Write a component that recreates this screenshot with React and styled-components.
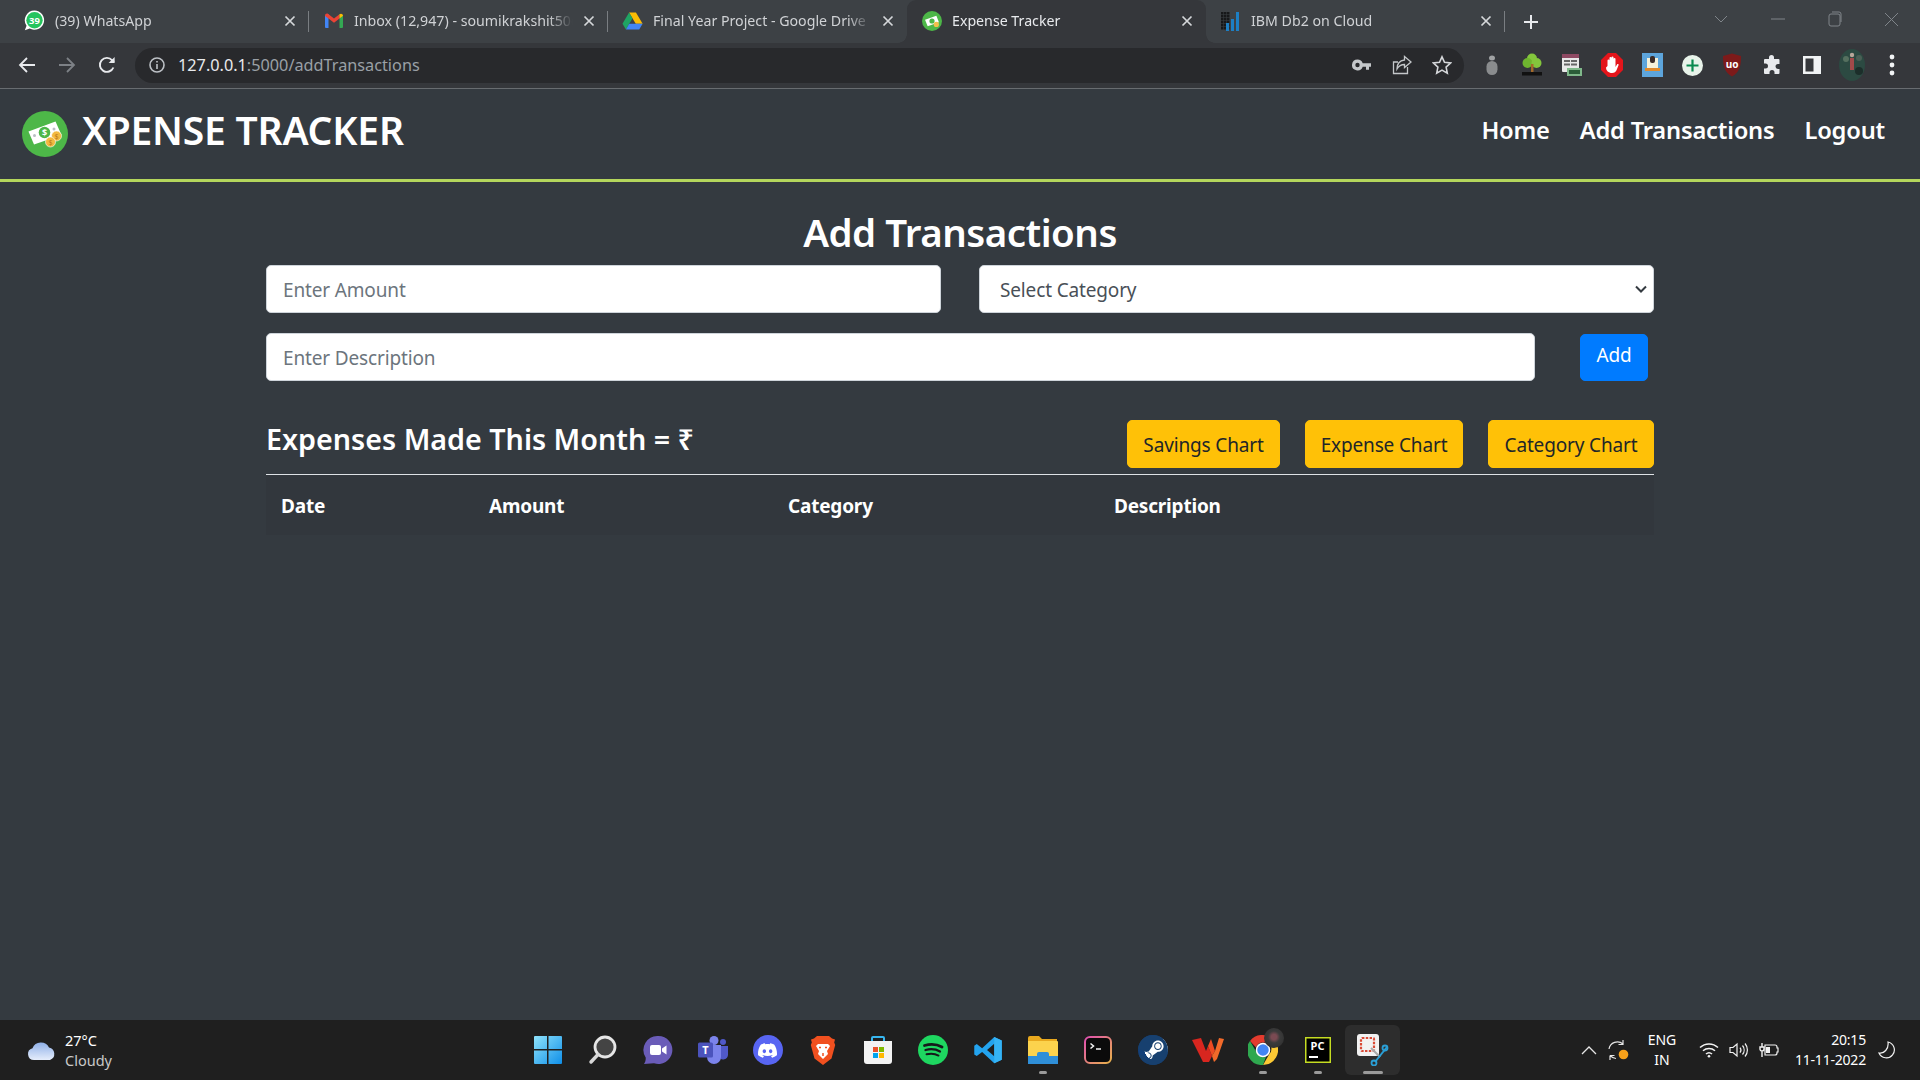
import React from "react";
import styled, { createGlobalStyle } from "styled-components";
import { SiDiscord, SiSteam } from "react-icons/si";

const GlobalStyle = createGlobalStyle`
  html, body { margin: 0; padding: 0; background: #343a40; }
  body { font-family: "Noto Sans", "Open Sans", Arial, sans-serif; overflow: hidden; }
  * { box-sizing: border-box; }
`;

/* ---------- browser favicons ---------- */

const WhatsappFav = () => (
  <svg width="21" height="21" viewBox="0 0 20 20">
    <path d="M10 0.5a9.2 9.2 0 1 1-4.6 17.2L0.8 19.4l1.6-4.5A9.2 9.2 0 0 1 10 0.5z" fill="#fff" />
    <circle cx="10" cy="9.7" r="7.8" fill="#25c45e" />
    <text x="10" y="13" fontSize="9" fontWeight="700" textAnchor="middle" fill="#fff" fontFamily="Noto Sans">39</text>
  </svg>
);

const GmailFav = () => (
  <svg width="20" height="20" viewBox="0 0 20 20">
    <path d="M1 4.5 4.5 3v14H2a1 1 0 0 1-1-1z" fill="#4285f4" />
    <path d="M19 4.5 15.5 3v14H18a1 1 0 0 0 1-1z" fill="#34a853" />
    <path d="M1 4.5C1 2.6 3 2 4.2 2.9L10 7.4l5.500-4.200v4.400L10 11.800 4.500 7.600 1 5z" fill="#ea4335" />
    <path d="M15.500 3.200c1.400-1.100 3.500-.4 3.500 1.500L15.500 7.600z" fill="#fbbc04" />
  </svg>
);

const DriveFav = () => (
  <svg width="22" height="20" viewBox="0 0 22 20">
    <path d="M7.400 1h7.200l7 12h-7.200z" fill="#fbbc04" />
    <path d="M7.400 1 0.500 13l3.600 6L11 7.200z" fill="#1fa463" />
    <path d="M7.600 13h14l-3.600 6H4.100z" fill="#4285f4" />
  </svg>
);

const ExpenseFav = () => (
  <svg width="20" height="20" viewBox="0 0 46 46">
    <circle cx="23" cy="23" r="23" fill="#4db748" />
    <path d="M7 20 33 11l6 15-26 9z" fill="#fff" />
    <circle cx="23" cy="23" r="6" fill="#4db748" />
    <circle cx="33" cy="31" r="6" fill="#f3c04c" />
  </svg>
);

const IbmFav = () => (
  <svg width="20" height="20" viewBox="0 0 20 20">
    <g fill="#17181a">
      {[1, 4, 7, 10, 13, 16].map((y) => (
        <g key={y}>
          <rect x="0" y={y} width="2.500" height="2.500" />
          <rect x="3" y={y} width="2.500" height="2.500" />
          <rect x="6" y={y} width="2.500" height="2.500" />
        </g>
      ))}
    </g>
    <rect x="5" y="12" width="3" height="8" fill="#1d7fc4" />
    <rect x="10" y="8" width="3" height="12" fill="#1d7fc4" />
    <rect x="15" y="1" width="3" height="19" fill="#1d7fc4" />
  </svg>
);

const CloseMark = () => (
  <svg width="12" height="12" viewBox="0 0 12 12">
    <path d="M1.500 1.500l9 9M10.500 1.500l-9 9" stroke="#d5d7da" strokeWidth="1.700" />
  </svg>
);

/* ---------- toolbar icons ---------- */

const BackIcon = ({ color }) => (
  <svg width="18" height="18" viewBox="0 0 18 18" fill="none" stroke={color} strokeWidth="1.800">
    <path d="M17 9H2M9 2 2 9l7 7" />
  </svg>
);

const ForwardIcon = ({ color }) => (
  <svg width="18" height="18" viewBox="0 0 18 18" fill="none" stroke={color} strokeWidth="1.800">
    <path d="M1 9h15M9 2l7 7-7 7" />
  </svg>
);

const ReloadIcon = () => (
  <svg width="18" height="18" viewBox="0 0 18 18" fill="none" stroke="#e8eaed" strokeWidth="1.900">
    <path d="M15.400 11.500A7 7 0 1 1 14.200 4.300L16 6" />
    <path d="M16.600 1v6h-6" fill="#e8eaed" stroke="none" />
  </svg>
);

const InfoIcon = () => (
  <svg width="18" height="18" viewBox="0 0 18 18" fill="none" stroke="#bdc1c6" strokeWidth="1.600">
    <circle cx="9" cy="9" r="7" />
    <path d="M9 8v5M9 5v1.600" />
  </svg>
);

const KeyIcon = () => (
  <svg width="20" height="12" viewBox="0 0 20 12">
    <path d="M5.500 0.500a5.500 5.500 0 0 1 5.200 3.700H19v3.600h-2v3h-3v-3h-3.300A5.500 5.500 0 1 1 5.500 0.500zm0 3.300a2.200 2.200 0 1 0 0 4.400 2.200 2.200 0 0 0 0-4.400z" fill="#c4c7ca" />
  </svg>
);

const ShareIcon = () => (
  <svg width="20" height="20" viewBox="0 0 20 20" fill="none" stroke="#c4c7ca" strokeWidth="1.300">
    <path d="M15.500 12v6.500H1.500V7H6" />
    <path d="M12.500 1.500 19 7l-6.500 5.500V9.500c-3.300 0-5.600 1.100-7.500 4.500 0-5 2.700-8.400 7.500-9z" />
  </svg>
);

const StarIcon = () => (
  <svg width="20" height="20" viewBox="0 0 20 20" fill="none" stroke="#d5d7da" strokeWidth="1.600">
    <path d="M10 1.800l2.500 5.500 6 .7-4.400 4.100 1.200 6L10 15.100 4.700 18.100l1.200-6L1.500 8l6-.7z" />
  </svg>
);

const GhostExt = () => (
  <svg width="14" height="24" viewBox="0 0 14 24">
    <ellipse cx="7" cy="5" rx="3" ry="2.500" fill="#a0a2a4" />
    <rect x="1.500" y="8" width="11" height="14" rx="5.500" fill="#8a8c8e" />
  </svg>
);

const TreeExt = () => (
  <svg width="22" height="24" viewBox="0 0 22 24">
    <circle cx="11" cy="5.500" r="5" fill="#83c63c" />
    <circle cx="6.500" cy="10" r="5" fill="#6fb52f" />
    <circle cx="15.500" cy="10" r="5" fill="#83c63c" />
    <rect x="10" y="11" width="2.500" height="8" fill="#a3692a" />
    <rect x="1" y="19" width="20" height="3.500" fill="#111" />
  </svg>
);

const CalcExt = () => (
  <svg width="20" height="24" viewBox="0 0 20 24">
    <rect x="0" y="1" width="17" height="18" rx="1" fill="#e8e8e8" />
    <rect x="0" y="1" width="17" height="4" fill="#8e4a63" />
    <g fill="#666">
      <rect x="2" y="7" width="6" height="2" />
      <rect x="9" y="7" width="6" height="2" />
      <rect x="2" y="10.500" width="6" height="2" />
      <rect x="9" y="10.500" width="6" height="2" />
    </g>
    <rect x="5" y="15" width="15" height="8" fill="#7fb88a" />
    <rect x="7" y="17" width="11" height="4" fill="#2b5d38" />
  </svg>
);

const StopExt = () => (
  <svg width="22" height="24" viewBox="0 0 22 24">
    <path d="M7 0h8l7 7v10l-7 7H7l-7-7V7z" fill="#e4151b" />
    <path d="M6.500 13V7.500a1 1 0 0 1 2 0V11V5a1 1 0 0 1 2 0v6V4.500a1 1 0 0 1 2 0V11V6a1 1 0 0 1 2 0v8l1.500-2.500c.6-1 2-.3 1.500.8l-2 5c-.7 1.500-2 2.700-4.500 2.700-3.500 0-6-2.500-6-5.500z" fill="#fff" />
  </svg>
);

const NoteExt = () => (
  <svg width="21" height="24" viewBox="0 0 21 24">
    <rect x="0" y="0" width="21" height="24" fill="#5da5dc" />
    <rect x="5" y="5" width="11" height="12" fill="#f6f1d9" />
    <rect x="8" y="3" width="5" height="7" rx="2" fill="#3a2c28" />
    <rect x="3" y="15" width="15" height="3" fill="#e08a2b" />
  </svg>
);

const PlusExt = () => (
  <svg width="21" height="21" viewBox="0 0 21 21">
    <circle cx="10.500" cy="10.500" r="10.500" fill="#e8f3ea" />
    <path d="M10.500 4.500v12M4.500 10.500h12" stroke="#0a8a4f" strokeWidth="2.200" />
  </svg>
);

const UblockExt = () => (
  <svg width="20" height="24" viewBox="0 0 20 24">
    <path d="M10 0.500 19 3c0 9-1 16-9 20.500C2 19 1 12 1 3z" fill="#7d1a1a" />
    <text x="10" y="14.500" fontSize="10" fontWeight="700" textAnchor="middle" fill="#fff" fontFamily="Noto Sans">uo</text>
  </svg>
);

const PuzzleExt = () => (
  <svg width="20" height="20" viewBox="0 0 20 20">
    <path d="M7 2.500a2.500 2.500 0 0 1 5 0V4h4.500a1 1 0 0 1 1 1v4h-1.500a2.500 2.500 0 0 0 0 5h1.500v4a1 1 0 0 1-1 1H12.500v-1.500a2.500 2.500 0 0 0-5 0V19H3a1 1 0 0 1-1-1v-4.500h1.500a2.500 2.500 0 0 0 0-5H2V5a1 1 0 0 1 1-1h4z" fill="#e8eaed" />
  </svg>
);

const SidebarExt = () => (
  <svg width="18" height="18" viewBox="0 0 18 18">
    <path d="M0 0h18v18H0zM2.500 2.500v13h8v-13z" fill="#f1f3f4" fillRule="evenodd" />
  </svg>
);

const AvatarExt = () => (
  <svg width="26" height="32" viewBox="0 0 26 32">
    <ellipse cx="13" cy="16" rx="13" ry="16" fill="#2c4a42" />
    <circle cx="7" cy="10" r="3" fill="#55705f" />
    <circle cx="20" cy="22" r="4" fill="#1c2e2a" />
    <circle cx="20" cy="9" r="3" fill="#4a5f55" />
    <rect x="11" y="9" width="4" height="12" fill="#a24a4a" />
    <circle cx="13" cy="6" r="2.200" fill="#b7a79a" />
  </svg>
);

const DotsExt = () => (
  <svg width="6" height="22" viewBox="0 0 6 22" fill="#f1f3f4">
    <circle cx="3" cy="3" r="2.400" />
    <circle cx="3" cy="11" r="2.400" />
    <circle cx="3" cy="19" r="2.400" />
  </svg>
);

/* ---------- site logo ---------- */

const BrandLogo = () => (
  <svg width="46" height="46" viewBox="0 0 46 46">
    <circle cx="23" cy="23" r="23" fill="#4db748" />
    <path d="M6.500 20.500 33.500 10.500l6 13.500L12 33.500z" fill="#fff" />
    <circle cx="22.500" cy="21.500" r="5.800" fill="#4db748" />
    <text x="22.500" y="25" fontSize="9" fontWeight="700" textAnchor="middle" fill="#fff" fontFamily="Noto Sans">$</text>
    <circle cx="12.500" cy="24.500" r="1.500" fill="#b9bfc4" />
    <circle cx="32" cy="18" r="1.500" fill="#b9bfc4" />
    <circle cx="34.500" cy="25" r="5" fill="#f3b93f" stroke="#fff" strokeWidth=".6" />
    <circle cx="28.500" cy="31" r="5" fill="#f3b93f" stroke="#fff" strokeWidth=".6" />
    <text x="34.500" y="28" fontSize="7" textAnchor="middle" fill="#b9791a" fontFamily="Noto Sans">$</text>
    <text x="28.500" y="34" fontSize="7" textAnchor="middle" fill="#b9791a" fontFamily="Noto Sans">$</text>
  </svg>
);

/* ---------- taskbar icons ---------- */

const WindowsIcon = () => (
  <svg width="30" height="30" viewBox="0 0 30 30">
    <defs>
      <linearGradient id="winGrad" x1="0" y1="0" x2="1" y2="1">
        <stop offset="0" stopColor="#8fe3fb" />
        <stop offset="1" stopColor="#0f8fe8" />
      </linearGradient>
    </defs>
    <path d="M1 2a1 1 0 0 1 1-1h12v13H1zM15.500 1H28a1 1 0 0 1 1 1v12H15.500zM1 15.500h13V29H2a1 1 0 0 1-1-1zM15.500 15.500H29V28a1 1 0 0 1-1 1H15.500z" fill="url(#winGrad)" />
  </svg>
);

const SearchIcon = () => (
  <svg width="30" height="30" viewBox="0 0 30 30">
    <circle cx="17" cy="12" r="10" fill="#444" stroke="#e6e6e6" strokeWidth="2.800" />
    <path d="M10 19.500 3 27" stroke="#d8d8d8" strokeWidth="3.400" strokeLinecap="round" />
  </svg>
);

const MeetIcon = () => (
  <svg width="30" height="30" viewBox="0 0 30 30">
    <path d="M15.500 1A14 14 0 1 1 11 28.300L1 29c1.500-2 1.800-4 1.700-6.500A14 14 0 0 1 15.500 1z" fill="#6a5cb8" />
    <rect x="7" y="10" width="11" height="10" rx="2" fill="#fff" />
    <path d="M19 13.500 23.500 10.500v9L19 16.500z" fill="#fff" />
  </svg>
);

const TeamsIcon = () => (
  <svg width="32" height="30" viewBox="0 0 32 30">
    <circle cx="17" cy="5.500" r="4.500" fill="#7b83eb" />
    <circle cx="26" cy="7" r="3" fill="#5059c9" />
    <path d="M21 11h10v9a5 5 0 0 1-9 2.500z" fill="#5059c9" />
    <path d="M10 10h14v12a7 7 0 0 1-14 0z" fill="#7b83eb" />
    <rect x="1" y="7.500" width="15" height="15" rx="1.500" fill="#4b53bc" />
    <text x="8.500" y="19" fontSize="11" fontWeight="700" textAnchor="middle" fill="#fff" fontFamily="Noto Sans">T</text>
  </svg>
);

const DiscordBadge = styled.span`
  width: 30px;
  height: 30px;
  border-radius: 50%;
  background: #5865f2;
  display: flex;
  align-items: center;
  justify-content: center;
  color: #fff;
  font-size: 19px;
`;

const BraveIcon = () => (
  <svg width="26" height="30" viewBox="0 0 26 30">
    <path d="M7 1h12l3 2.500 3 1-.8 3 1 2.500-3.700 13.500L13 30l-8.500-6.500L.8 10l1-2.500-.8-3 3-1z" fill="#f1501f" />
    <path d="M8 9h10l2 2-3 5 1 3-5 5-5-5 1-3-3-5z" fill="#fff" />
    <path d="M11 12.500h-2M17 12.500h-2M13 18v3" stroke="#f1501f" strokeWidth="1.500" />
  </svg>
);

const StoreIcon = () => (
  <svg width="30" height="30" viewBox="0 0 30 30">
    <path d="M9 6V3a1 1 0 0 1 1-1h10a1 1 0 0 1 1 1v3" fill="none" stroke="#37b6ef" strokeWidth="2" />
    <path d="M1 6h28v20a3 3 0 0 1-3 3H4a3 3 0 0 1-3-3z" fill="#f3f3f3" />
    <rect x="10" y="12" width="5" height="5" fill="#e9522b" />
    <rect x="16" y="12" width="5" height="5" fill="#7fb900" />
    <rect x="10" y="18" width="5" height="5" fill="#00a3ee" />
    <rect x="16" y="18" width="5" height="5" fill="#ffb800" />
  </svg>
);

const SpotifyIcon = () => (
  <svg width="30" height="30" viewBox="0 0 30 30">
    <circle cx="15" cy="15" r="15" fill="#1ed760" />
    <g fill="none" stroke="#15191a" strokeLinecap="round">
      <path d="M6.500 10.500c6-1.700 12.500-1.200 17.500 1.500" strokeWidth="2.800" />
      <path d="M7.500 15c5-1.300 10.500-.8 14.500 1.500" strokeWidth="2.300" />
      <path d="M8.500 19.300c4.300-1 8.500-.7 12 1.300" strokeWidth="1.900" />
    </g>
  </svg>
);

const VscodeIcon = () => (
  <svg width="30" height="30" viewBox="0 0 24 24">
    <path d="M17 1.500 23 4.300v15.400L17 22.500 7.300 13.500 3 16.800 1 15.500V8.500l2-1.300 4.300 3.300zM17 7 11.200 12 17 17z" fill="#23a3ee" fillRule="evenodd" />
    <path d="M17 1.500 23 4.300v15.400L17 22.500z" fill="#35b3f5" />
  </svg>
);

const FolderIcon = () => (
  <svg width="32" height="30" viewBox="0 0 32 30">
    <path d="M1 3a2 2 0 0 1 2-2h9l3 3h15a2 2 0 0 1 0 0v3H1z" fill="#e9a91e" />
    <path d="M1 6h29a1 1 0 0 1 1 1v21a1 1 0 0 1-1 1H2a1 1 0 0 1-1-1z" fill="#fcd34d" />
    <path d="M10 19a2 2 0 0 1 2-2h8a2 2 0 0 1 2 2v2h9v8H1v-8h9z" fill="#2f8fd8" />
  </svg>
);

const TerminalIcon = () => (
  <svg width="28" height="28" viewBox="0 0 28 28">
    <defs>
      <linearGradient id="termGrad" x1="0" y1="0" x2="1" y2="1">
        <stop offset="0" stopColor="#e04fb0" />
        <stop offset="1" stopColor="#e8b24a" />
      </linearGradient>
    </defs>
    <rect x="1" y="1" width="26" height="26" rx="5" fill="#0b0b0b" stroke="url(#termGrad)" strokeWidth="2" />
    <path d="M6.500 7.500 9.500 10l-3 2.500M12 13h5" fill="none" stroke="#f4f4f4" strokeWidth="1.500" />
  </svg>
);

const SteamBadge = styled.span`
  width: 30px;
  height: 30px;
  border-radius: 50%;
  background: radial-gradient(circle at 60% 45%, #fff 48%, #123f79 49%);
  display: flex;
  align-items: center;
  justify-content: center;
  color: #17406f;
  font-size: 30px;
`;

const WpsIcon = () => (
  <svg width="32" height="26" viewBox="0 0 32 26">
    <path d="M0 3 9 1l5 13 2-5 4 10-3 6h-6z" fill="#d8261f" />
    <path d="M16 9 19 2l4 12-3 5z" fill="#ee4b22" />
    <path d="M23 14 27 1l5 1-7 20-3 3-2-6z" fill="#f26a2a" />
  </svg>
);

const ChromeIcon = () => (
  <svg width="30" height="30" viewBox="0 0 30 30">
    <path d="M15 0a15 15 0 0 1 13 7.500H15a7.500 7.500 0 0 0-7 5L2 6A15 15 0 0 1 15 0z" fill="#e33b2e" />
    <path d="M28 7.500A15 15 0 0 1 15 30l6.500-11.200A7.500 7.500 0 0 0 20 7.500z" fill="#fcc934" />
    <path d="M2 6l6.500 11.200a7.500 7.500 0 0 0 9.500 4.600L15 30A15 15 0 0 1 2 6z" fill="#2fa84f" />
    <circle cx="15" cy="15" r="6.500" fill="#4285f4" stroke="#fff" strokeWidth="1.500" />
  </svg>
);

const ChromeBadge = styled.span`
  position: absolute;
  top: 3px;
  right: 6px;
  width: 20px;
  height: 20px;
  border-radius: 50%;
  background: radial-gradient(circle at 50% 45%, #7a4a52 0 18%, #3b3b3b 40%, #2b2b2b);
`;

const PycharmIcon = () => (
  <svg width="26" height="26" viewBox="0 0 26 26">
    <rect x="0.500" y="0.500" width="25" height="25" fill="#000" stroke="#c5dc22" strokeWidth="2" />
    <text x="12.500" y="13" fontSize="11" fontWeight="700" textAnchor="middle" fill="#fff" fontFamily="Noto Sans">PC</text>
    <rect x="4" y="19" width="9" height="2" fill="#fff" />
  </svg>
);

const SnipIcon = () => (
  <svg width="32" height="32" viewBox="0 0 32 32">
    <rect x="0" y="0" width="22" height="22" rx="3" fill="#f2f2f2" />
    <rect x="4" y="4" width="13" height="13" rx="1" fill="none" stroke="#d94a36" strokeWidth="2.200" strokeDasharray="2.400 1.400" />
    <path d="M14 14l9 9" stroke="#a9a9a9" strokeWidth="2" />
    <path d="M30 13 18 28" stroke="#2a9fd6" strokeWidth="2" />
    <circle cx="28" cy="14" r="2.500" fill="none" stroke="#2a9fd6" strokeWidth="1.800" />
    <circle cx="17" cy="29" r="2.500" fill="none" stroke="#2a9fd6" strokeWidth="1.800" />
  </svg>
);

/* ---------- tray icons ---------- */

const ChevronUpIcon = () => (
  <svg width="16" height="10" viewBox="0 0 16 10" fill="none" stroke="#e6e6e6" strokeWidth="1.300">
    <path d="M1 9 8 2l7 7" />
  </svg>
);

const SyncIcon = () => (
  <svg width="22" height="22" viewBox="0 0 22 22" fill="none" stroke="#e6e6e6" strokeWidth="1.200">
    <path d="M1 10a8.500 8.500 0 0 1 14-5M15 1v4.500h-4.500" />
    <path d="M2 16.500h4.500M2 16.500V21M2 16.500c2 2 4 3 6 3" />
    <circle cx="15.500" cy="15.500" r="4.800" fill="#f7a11a" stroke="none" />
  </svg>
);

const WifiIcon = () => (
  <svg width="20" height="16" viewBox="0 0 20 16" fill="none" stroke="#f2f2f2" strokeWidth="1.500">
    <path d="M1 5.500a13 13 0 0 1 18 0M4 8.800a9 9 0 0 1 12 0M7 12a4.500 4.500 0 0 1 6 0" />
    <circle cx="10" cy="14.300" r="1.300" fill="#f2f2f2" stroke="none" />
  </svg>
);

const VolumeIcon = () => (
  <svg width="20" height="16" viewBox="0 0 20 16" fill="none" stroke="#f2f2f2" strokeWidth="1.200">
    <path d="M1 5.500h3L8 2v12l-4-3.500H1z" />
    <path d="M11 5.500a4 4 0 0 1 0 5M13.500 3.500a7 7 0 0 1 0 9M16 1.500a10 10 0 0 1 0 13" />
  </svg>
);

const BatteryIcon = () => (
  <svg width="20" height="16" viewBox="0 0 20 16" fill="none" stroke="#f2f2f2" strokeWidth="1.200">
    <path d="M6 3h10a2 2 0 0 1 2 2v1h1v4h-1v1a2 2 0 0 1-2 2H6z" />
    <rect x="7" y="5" width="4" height="6" fill="#f2f2f2" stroke="none" />
    <path d="M3 1v4M1 5h4v2a2 2 0 0 1-4 0zM3 9v6" strokeWidth="1.400" />
  </svg>
);

const MoonIcon = () => (
  <svg width="18" height="18" viewBox="0 0 18 18" fill="none" stroke="#f2f2f2" strokeWidth="1.200">
    <path d="M10 1a8 8 0 1 1-9 11c5 1 10-4 9-11z" />
  </svg>
);

const CloudIcon = () => (
  <svg width="30" height="22" viewBox="0 0 30 22">
    <defs>
      <linearGradient id="cloudGrad" x1="0" y1="0" x2="0" y2="1">
        <stop offset="0" stopColor="#8fb0e8" />
        <stop offset="1" stopColor="#e5edfb" />
      </linearGradient>
    </defs>
    <path d="M8 21a6 6 0 0 1-1.500-11.800A9 9 0 0 1 23 8.500 6.500 6.500 0 0 1 24 21z" fill="url(#cloudGrad)" />
  </svg>
);

/* ---------- data ---------- */

const tabs = [
  { title: "(39) WhatsApp", icon: <WhatsappFav />, divider: true },
  { title: "Inbox (12,947) - soumikrakshit50@gmail.com", icon: <GmailFav />, divider: true },
  { title: "Final Year Project - Google Drive", icon: <DriveFav /> },
  { title: "Expense Tracker", icon: <ExpenseFav />, active: true },
  { title: "IBM Db2 on Cloud", icon: <IbmFav />, divider: true },
];

const extensions = [
  <GhostExt />, <TreeExt />, <CalcExt />, <StopExt />, <NoteExt />, <PlusExt />,
  <UblockExt />, <PuzzleExt />, <SidebarExt />, <AvatarExt />, <DotsExt />,
];

const dockItems = [
  { icon: <WindowsIcon /> },
  { icon: <SearchIcon /> },
  { icon: <MeetIcon /> },
  { icon: <TeamsIcon /> },
  { icon: <DiscordBadge><SiDiscord /></DiscordBadge> },
  { icon: <BraveIcon /> },
  { icon: <StoreIcon /> },
  { icon: <SpotifyIcon /> },
  { icon: <VscodeIcon /> },
  { icon: <FolderIcon />, running: true },
  { icon: <TerminalIcon /> },
  { icon: <SteamBadge><SiSteam /></SteamBadge> },
  { icon: <WpsIcon /> },
  { icon: <ChromeIcon />, running: true, badge: true },
  { icon: <PycharmIcon />, running: true },
  { icon: <SnipIcon />, focused: true },
];

const App = () => (
  <Screen>
    <GlobalStyle />
    <TabStrip>
      {tabs.map((tab) => (
        <Tab key={tab.title} $active={tab.active}>
          <Favicon>{tab.icon}</Favicon>
          <TabTitle>{tab.title}</TabTitle>
          <CloseMark />
          {tab.divider && <TabDivider />}
        </Tab>
      ))}
      <NewTab>
        <svg width="16" height="16" viewBox="0 0 16 16" stroke="#e8eaed" strokeWidth="2">
          <path d="M8 1v14M1 8h14" />
        </svg>
      </NewTab>
      <WindowControls>
        <WindowButton>
          <svg width="14" height="8" viewBox="0 0 14 8" fill="none" stroke="#80858a"><path d="M1 1l6 6 6-6" /></svg>
        </WindowButton>
        <WindowButton>
          <svg width="14" height="2" viewBox="0 0 14 2" stroke="#80858a"><path d="M0 1h14" /></svg>
        </WindowButton>
        <WindowButton>
          <svg width="14" height="16" viewBox="0 0 14 16" fill="none" stroke="#80858a"><rect x="1" y="3" width="11" height="12" rx="2" /><path d="M4 1h7a2 2 0 0 1 2 2v8" /></svg>
        </WindowButton>
        <WindowButton>
          <svg width="15" height="15" viewBox="0 0 15 15" stroke="#80858a"><path d="M1 1l13 13M14 1 1 14" /></svg>
        </WindowButton>
      </WindowControls>
    </TabStrip>

    <Toolbar>
      <ToolSlot><BackIcon color="#e8eaed" /></ToolSlot>
      <ToolSlot><ForwardIcon color="#7d8186" /></ToolSlot>
      <ToolSlot><ReloadIcon /></ToolSlot>
      <AddressBar>
        <InfoIcon />
        <Url>127.0.0.1<UrlRest>:5000/addTransactions</UrlRest></Url>
        <ToolSlot><KeyIcon /></ToolSlot>
        <ToolSlot><ShareIcon /></ToolSlot>
        <ToolSlot><StarIcon /></ToolSlot>
      </AddressBar>
      <Extensions>
        {extensions.map((icon, i) => (
          <ToolSlot key={i}>{icon}</ToolSlot>
        ))}
      </Extensions>
    </Toolbar>

    <NavBar>
      <Brand>
        <BrandLogo />
        <BrandName>XPENSE TRACKER</BrandName>
      </Brand>
      <NavLinks>
        <NavLink>Home</NavLink>
        <NavLink>Add Transactions</NavLink>
        <NavLink>Logout</NavLink>
      </NavLinks>
    </NavBar>

    <Main>
      <PageTitle>Add Transactions</PageTitle>
      <TwoCols>
        <TextInput placeholder="Enter Amount" />
        <SelectWrap>
          <Select defaultValue="">
            <option value="">Select Category</option>
          </Select>
          <SelectArrow width="12" height="8" viewBox="0 0 12 8" fill="none" stroke="#343a40" strokeWidth="2">
            <path d="M1 1.500l5 5 5-5" />
          </SelectArrow>
        </SelectWrap>
      </TwoCols>
      <DescriptionRow>
        <TextInput placeholder="Enter Description" />
        <AddButton>Add</AddButton>
      </DescriptionRow>
      <SummaryRow>
        <SummaryTitle>Expenses Made This Month = ₹</SummaryTitle>
        <ChartButtons>
          <ChartButton $width={153}>Savings Chart</ChartButton>
          <ChartButton $width={158}>Expense Chart</ChartButton>
          <ChartButton $width={166}>Category Chart</ChartButton>
        </ChartButtons>
      </SummaryRow>
      <Table>
        <colgroup>
          <col width="208" />
          <col width="299" />
          <col width="326" />
          <col />
        </colgroup>
        <thead>
          <tr>
            <Th>Date</Th>
            <Th>Amount</Th>
            <Th>Category</Th>
            <Th>Description</Th>
          </tr>
        </thead>
      </Table>
    </Main>

    <Taskbar>
      <Weather>
        <CloudIcon />
        <WeatherText>
          <span>27°C</span>
          <WeatherMuted>Cloudy</WeatherMuted>
        </WeatherText>
      </Weather>
      <Dock>
        {dockItems.map((item, i) => (
          <DockItem key={i} $focused={item.focused}>
            {item.icon}
            {item.badge && <ChromeBadge />}
            {item.running && <RunDot />}
            {item.focused && <RunDot $wide />}
          </DockItem>
        ))}
      </Dock>
      <Tray>
        <TraySlot><ChevronUpIcon /></TraySlot>
        <TraySlot><SyncIcon /></TraySlot>
        <Lang>
          <span>ENG</span>
          <span>IN</span>
        </Lang>
        <TraySlot><WifiIcon /></TraySlot>
        <TraySlot><VolumeIcon /></TraySlot>
        <TraySlot><BatteryIcon /></TraySlot>
        <Clock>
          <span>20:15</span>
          <span>11-11-2022</span>
        </Clock>
        <TraySlot><MoonIcon /></TraySlot>
      </Tray>
    </Taskbar>
  </Screen>
);

export default App;

const Screen = styled.div`
  width: 1920px;
  height: 1080px;
  display: flex;
  flex-direction: column;
  background: #343a40;
  color: #fff;
`;

const TabStrip = styled.div`
  height: 43px;
  flex: none;
  display: flex;
  align-items: stretch;
  padding-left: 10px;
  background: #3d4145;
`;

const Tab = styled.div`
  position: relative;
  width: 299px;
  flex: none;
  display: flex;
  align-items: center;
  padding: 0 13px 2px 14px;
  background: ${(p) => (p.$active ? "#35373b" : "transparent")};
  border-radius: ${(p) => (p.$active ? "9px 9px 0 0" : "0")};
  color: ${(p) => (p.$active ? "#e8eaed" : "#d0d2d5")};

  ${(p) =>
    p.$active &&
    `
    &::before, &::after {
      content: "";
      position: absolute;
      bottom: 0;
      width: 9px;
      height: 9px;
    }
    &::before {
      left: -9px;
      background: radial-gradient(circle at 0 0, transparent 8.5px, #35373b 9px);
    }
    &::after {
      right: -9px;
      background: radial-gradient(circle at 100% 0, transparent 8.5px, #35373b 9px);
    }
  `}
`;

const TabDivider = styled.span`
  position: absolute;
  right: 0;
  top: 11px;
  height: 21px;
  width: 1px;
  background: #7a7e82;
`;

const Favicon = styled.span`
  width: 21px;
  height: 20px;
  flex: none;
  display: flex;
  align-items: center;
  justify-content: center;
`;

const TabTitle = styled.span`
  flex: 1;
  min-width: 0;
  margin: 0 8px 0 10px;
  overflow: hidden;
  white-space: nowrap;
  font-size: 14.2px;
  mask-image: linear-gradient(to right, #000 88%, transparent 99%);
`;

const NewTab = styled.div`
  width: 52px;
  flex: none;
  display: flex;
  align-items: center;
  justify-content: center;
`;

const WindowControls = styled.div`
  margin-left: auto;
  display: flex;
  align-items: flex-start;
`;

const WindowButton = styled.div`
  width: 57px;
  height: 38px;
  display: flex;
  align-items: center;
  justify-content: center;
`;

const Toolbar = styled.div`
  height: 46px;
  flex: none;
  display: flex;
  align-items: center;
  padding: 0 8px 1px 7px;
  background: #35373b;
  border-bottom: 1px solid #686c70;
`;

const ToolSlot = styled.div`
  width: 40px;
  height: 35px;
  flex: none;
  display: flex;
  align-items: center;
  justify-content: center;
`;

const AddressBar = styled.div`
  flex: 1;
  height: 35px;
  margin: 0 8px;
  display: flex;
  align-items: center;
  padding: 0 2px 0 13px;
  background: #28292c;
  border-radius: 18px;
`;

const Url = styled.div`
  flex: 1;
  margin-left: 12px;
  font-size: 16.25px;
  color: #e8eaed;
`;

const UrlRest = styled.span`
  color: #9aa0a6;
`;

const Extensions = styled.div`
  display: flex;
`;

const NavBar = styled.nav`
  height: 93px;
  flex: none;
  display: flex;
  align-items: center;
  justify-content: space-between;
  padding: 0 35px 0 22px;
  border-bottom: 3px solid #b4d65c;
`;

const Brand = styled.div`
  display: flex;
  align-items: center;
  gap: 14px;
`;

const BrandName = styled.div`
  margin-bottom: 8px;
  font-size: 39px;
  font-weight: 600;
  letter-spacing: -0.2px;
  line-height: 48px;
`;

const NavLinks = styled.div`
  display: flex;
  gap: 30px;
  margin-bottom: 8px;
`;

const NavLink = styled.a`
  font-size: 23.7px;
  font-weight: 600;
  letter-spacing: -0.2px;
  line-height: 36px;
  color: #fff;
`;

const Main = styled.main`
  width: 1388px;
  margin: 0 auto;
  flex: 1;
`;

const PageTitle = styled.h1`
  margin: 26px 0 9px;
  font-size: 38.5px;
  font-weight: 600;
  letter-spacing: -0.5px;
  line-height: 48px;
  text-align: center;
`;

const TwoCols = styled.div`
  display: grid;
  grid-template-columns: 675px 675px;
  justify-content: space-between;
  height: 48px;
`;

const TextInput = styled.input`
  display: block;
  width: 100%;
  height: 100%;
  padding: 2px 16px 0;
  border: 1px solid #ced4da;
  border-radius: 5px;
  background: #fff;
  font: 400 19px "Noto Sans", sans-serif;
  letter-spacing: -0.15px;
  color: #495057;
  outline: none;

  &::placeholder {
    color: #6c757d;
    opacity: 1;
  }
`;

const SelectWrap = styled.div`
  position: relative;
  height: 100%;
`;

const Select = styled.select`
  display: block;
  width: 100%;
  height: 100%;
  padding: 2px 16px 0 20px;
  border: 1px solid #ced4da;
  border-radius: 5px;
  background: #fff;
  font: 400 19px "Noto Sans", sans-serif;
  letter-spacing: -0.15px;
  color: #495057;
  outline: none;
  appearance: none;
`;

const SelectArrow = styled.svg`
  position: absolute;
  right: 7px;
  top: 20px;
  pointer-events: none;
`;

const DescriptionRow = styled.div`
  display: grid;
  grid-template-columns: 1269px 68px;
  column-gap: 45px;
  height: 47px;
  margin-top: 20px;
`;

const AddButton = styled.button`
  height: 47px;
  margin-top: 1px;
  padding: 0 0 6px;
  border: 1px solid #007bff;
  border-radius: 5px;
  background: #007bff;
  color: #fff;
  font: 400 19px "Noto Sans", sans-serif;
  letter-spacing: -0.15px;
`;

const SummaryRow = styled.div`
  display: flex;
  align-items: flex-start;
  justify-content: space-between;
  margin-top: 40px;
  padding-bottom: 6px;
  border-bottom: 1px solid #dee2e6;
`;

const SummaryTitle = styled.h3`
  margin: -2px 0 0 0;
  font-size: 28.7px;
  font-weight: 600;
  line-height: 42px;
`;

const ChartButtons = styled.div`
  display: flex;
  gap: 25px;
`;

const ChartButton = styled.button`
  width: ${(p) => p.$width}px;
  height: 48px;
  padding: 1px 0 0;
  border: 1px solid #ffc107;
  border-radius: 5px;
  background: #ffc107;
  color: #212529;
  font: 400 19px "Noto Sans", sans-serif;
  letter-spacing: -0.15px;
`;

const Table = styled.table`
  width: 100%;
  border-collapse: collapse;
  table-layout: fixed;
  background: #32373d;
`;

const Th = styled.th`
  height: 60px;
  padding: 2px 15px 0;
  font-size: 19px;
  font-weight: 700;
  letter-spacing: -0.2px;
  text-align: left;
`;

const Taskbar = styled.footer`
  height: 60px;
  flex: none;
  display: grid;
  grid-template-columns: 1fr auto 1fr;
  align-items: center;
  background: #1f1f1f;
`;

const Weather = styled.div`
  display: flex;
  align-items: center;
  gap: 9px;
  padding-left: 26px;
`;

const WeatherText = styled.div`
  display: flex;
  flex-direction: column;
  font-size: 14.5px;
  line-height: 20px;
`;

const WeatherMuted = styled.span`
  color: #c8c8c8;
`;

const Dock = styled.div`
  display: flex;
`;

const DockItem = styled.div`
  position: relative;
  width: 55px;
  height: 50px;
  display: flex;
  align-items: center;
  justify-content: center;
  border-radius: 6px;
  background: ${(p) => (p.$focused ? "#2d2d2d" : "transparent")};
`;

const RunDot = styled.span`
  position: absolute;
  bottom: 1px;
  left: 50%;
  width: ${(p) => (p.$wide ? "20px" : "8px")};
  height: 3px;
  margin-left: ${(p) => (p.$wide ? "-10px" : "-4px")};
  border-radius: 2px;
  background: #9a9a9a;
`;

const Tray = styled.div`
  display: flex;
  align-items: center;
  justify-content: flex-end;
  padding-right: 18px;
`;

const TraySlot = styled.div`
  width: 30px;
  height: 30px;
  flex: none;
  display: flex;
  align-items: center;
  justify-content: center;
`;

const Lang = styled.div`
  width: 44px;
  margin: 0 10px 0 6px;
  display: flex;
  flex-direction: column;
  align-items: center;
  font-size: 14px;
  line-height: 20px;
`;

const Clock = styled.div`
  width: 82px;
  margin-right: 6px;
  display: flex;
  flex-direction: column;
  align-items: flex-end;
  font-size: 14px;
  letter-spacing: -0.2px;
  line-height: 20px;
`;
